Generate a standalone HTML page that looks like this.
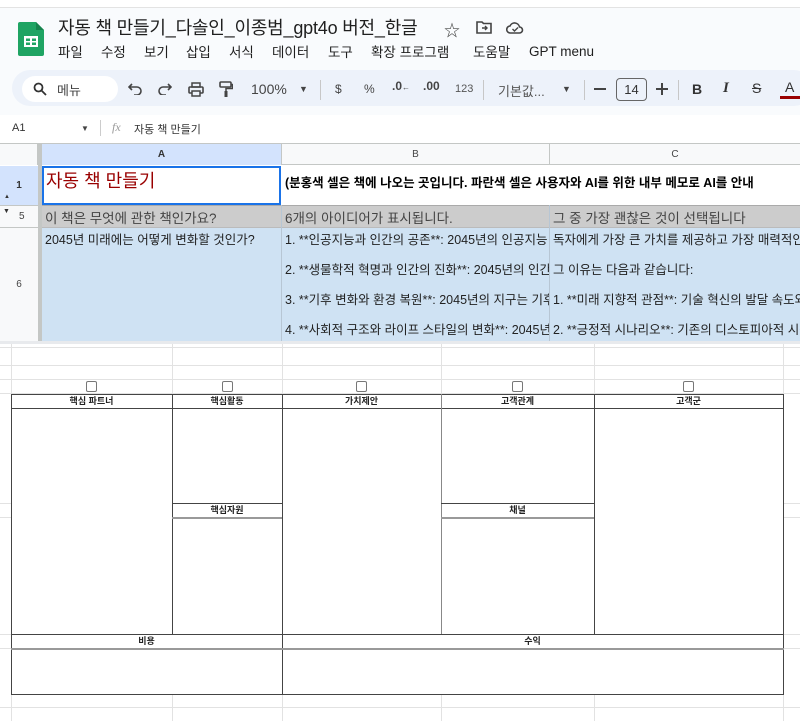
<!DOCTYPE html>
<html><head><meta charset="utf-8"><style>
*{margin:0;padding:0;box-sizing:border-box}
body{width:800px;height:721px;overflow:hidden;background:#fff;font-family:"Liberation Sans","Noto Sans CJK KR",sans-serif;position:relative;color:#1f1f1f}
.a{position:absolute;white-space:nowrap}
.hl{position:absolute;height:1px;background:#e2e2e2}
.vl{position:absolute;width:1px;background:#e2e2e2}
.bl{position:absolute;background:#444}
.lab{position:absolute;font-size:9px;font-weight:bold;text-align:center;line-height:14px;color:#222}
.cb{position:absolute;width:11px;height:11px;border:1.5px solid #777;border-radius:2px;background:#fff}
.m{position:absolute;top:43px;font-size:13.5px;line-height:20px;height:20px;color:#1f1f1f;white-space:nowrap}
</style></head><body>
<div class="a" style="left:0;top:7px;width:800px;height:136px;background:#f9fbfd;border-top:1px solid #e3e3e3"></div>
<svg class="a" style="left:18px;top:22px" width="26" height="34" viewBox="0 0 26 34"><path d="M2 0h16l8 8v24a2 2 0 0 1-2 2H2a2 2 0 0 1-2-2V2a2 2 0 0 1 2-2z" fill="#1fa463"/><path d="M18 0v8h8z" fill="#16834d"/><rect x="6" y="14" width="14" height="11" fill="#fff"/><rect x="8" y="16.5" width="4" height="2.5" fill="#1fa463"/><rect x="14" y="16.5" width="4" height="2.5" fill="#1fa463"/><rect x="8" y="20.5" width="4" height="2.5" fill="#1fa463"/><rect x="14" y="20.5" width="4" height="2.5" fill="#1fa463"/></svg>
<div class="a" style="left:58px;top:14px;font-size:18px;letter-spacing:-0.2px;color:#1f1f1f">자동 책 만들기_다솔인_이종범_gpt4o 버전_한글</div>
<div class="a" style="left:444px;top:17px;font-size:16px;color:#444">☆</div>
<svg class="a" style="left:476px;top:21px" width="16" height="13" viewBox="0 0 16 13"><path d="M1 1h5l1.5 1.5H15V12H1z" fill="none" stroke="#444" stroke-width="1.6"/><path d="M6 7h5M9 5l2 2-2 2" stroke="#444" stroke-width="1.4" fill="none"/></svg>
<svg class="a" style="left:506px;top:21px" width="18" height="13" viewBox="0 0 18 13"><path d="M4.5 12a3.5 3.5 0 0 1-.5-7 5 5 0 0 1 9.5 1A3 3 0 0 1 13.5 12z" fill="none" stroke="#444" stroke-width="1.6"/><path d="M6.5 8l2 2 3.5-3.5" stroke="#444" stroke-width="1.4" fill="none"/></svg>
<div class="m" style="left:58px">파일</div>
<div class="m" style="left:101px">수정</div>
<div class="m" style="left:144px">보기</div>
<div class="m" style="left:186px">삽입</div>
<div class="m" style="left:229px">서식</div>
<div class="m" style="left:272px">데이터</div>
<div class="m" style="left:328px">도구</div>
<div class="m" style="left:371px">확장 프로그램</div>
<div class="m" style="left:473px">도움말</div>
<div class="m" style="left:529px;top:42px">GPT menu</div>
<div class="a" style="left:12px;top:70px;width:800px;height:36px;background:#edf2fa;border-radius:18px"></div>
<div class="a" style="left:22px;top:76px;width:96px;height:26px;background:#fff;border-radius:13px"></div>
<svg class="a" style="left:33px;top:82px" width="14" height="14" viewBox="0 0 14 14"><circle cx="5.5" cy="5.5" r="4" fill="none" stroke="#333" stroke-width="1.8"/><path d="M8.5 8.5l4.5 4.5" stroke="#333" stroke-width="1.8"/></svg>
<div class="a" style="left:57px;top:80px;font-size:13px;color:#444">메뉴</div>
<svg class="a" style="left:128px;top:83px" width="14" height="12" viewBox="0 0 14 12"><path d="M4 1L1 4l3 3M1 4h8a4 4 0 0 1 0 8H6" fill="none" stroke="#444" stroke-width="1.6"/></svg>
<svg class="a" style="left:158px;top:83px" width="14" height="12" viewBox="0 0 14 12"><path d="M10 1l3 3-3 3M13 4H5a4 4 0 0 0 0 8h3" fill="none" stroke="#444" stroke-width="1.6"/></svg>
<svg class="a" style="left:188px;top:82px" width="16" height="15" viewBox="0 0 16 15"><rect x="1" y="5" width="14" height="6" rx="1" fill="none" stroke="#444" stroke-width="1.6"/><rect x="4" y="1" width="8" height="4" fill="none" stroke="#444" stroke-width="1.5"/><rect x="4" y="9" width="8" height="5" fill="#edf2fa" stroke="#444" stroke-width="1.5"/></svg>
<svg class="a" style="left:219px;top:81px" width="14" height="17" viewBox="0 0 14 17"><rect x="1" y="1" width="11" height="5" rx="1" fill="none" stroke="#444" stroke-width="1.6"/><path d="M12 3.5h1.5v4H7v3" fill="none" stroke="#444" stroke-width="1.5"/><rect x="5.5" y="10" width="3" height="6" fill="#444"/></svg>
<div class="a" style="left:251px;top:81px;font-size:14px;color:#444">100%</div>
<div class="a" style="left:299px;top:84px;font-size:9px;color:#444">▼</div>
<div class="a" style="left:320px;top:80px;width:1px;height:20px;background:#c7c7c7"></div>
<div class="a" style="left:335px;top:82px;font-size:12px;color:#444">$</div>
<div class="a" style="left:364px;top:82px;font-size:12px;color:#444">%</div>
<div class="a" style="left:392px;top:79px;font-size:12px;color:#444;font-weight:bold">.0<span style="font-size:8px">←</span></div>
<div class="a" style="left:423px;top:79px;font-size:12px;color:#444;font-weight:bold">.00</div>
<div class="a" style="left:455px;top:83px;font-size:11px;color:#555">123</div>
<div class="a" style="left:483px;top:80px;width:1px;height:20px;background:#c7c7c7"></div>
<div class="a" style="left:498px;top:81px;font-size:13px;color:#555">기본값...</div>
<div class="a" style="left:562px;top:84px;font-size:9px;color:#444">▼</div>
<div class="a" style="left:584px;top:80px;width:1px;height:20px;background:#c7c7c7"></div>
<div class="a" style="left:594px;top:88px;width:12px;height:2px;background:#444"></div>
<div class="a" style="left:616px;top:78px;width:31px;height:23px;border:1px solid #666;border-radius:4px;font-size:13px;text-align:center;line-height:21px;color:#333">14</div>
<div class="a" style="left:656px;top:88px;width:12px;height:2px;background:#444"></div>
<div class="a" style="left:661px;top:83px;width:2px;height:12px;background:#444"></div>
<div class="a" style="left:678px;top:80px;width:1px;height:20px;background:#c7c7c7"></div>
<div class="a" style="left:692px;top:81px;font-size:14px;font-weight:bold;color:#333">B</div>
<div class="a" style="left:723px;top:80px;font-size:15px;font-style:italic;font-family:'Liberation Serif',serif;font-weight:bold;color:#333">I</div>
<div class="a" style="left:752px;top:80px;font-size:14px;color:#333;text-decoration:line-through">S</div>
<div class="a" style="left:785px;top:79px;font-size:14px;color:#333">A</div>
<div class="a" style="left:780px;top:96px;width:20px;height:3px;background:#990000"></div>
<div class="a" style="left:0;top:115px;width:800px;height:28px;background:#fff"></div>
<div class="a" style="left:12px;top:122px;font-size:11px;color:#333">A1</div>
<div class="a" style="left:81px;top:124px;font-size:8px;color:#444">▼</div>
<div class="a" style="left:100px;top:120px;width:1px;height:16px;background:#ccc"></div>
<div class="a" style="left:112px;top:120px;font-size:12px;font-style:italic;font-family:'Liberation Serif',serif;color:#999">fx</div>
<div class="a" style="left:134px;top:121px;font-size:11px;color:#333">자동 책 만들기</div>
<div class="a" style="left:0;top:143px;width:800px;height:1px;background:#c4c7c5"></div>
<div class="a" style="left:0;top:144px;width:800px;height:21px;background:#f8f9fa;border-bottom:1px solid #c4c7c5"></div>
<div class="a" style="left:0;top:144px;width:38px;height:21px;background:#f8f9fa;border-right:1px solid #c4c7c5"></div>
<div class="a" style="left:38px;top:144px;width:4px;height:200px;background:#c4c7c5"></div>
<div class="a" style="left:42px;top:144px;width:239px;height:21px;background:#d3e3fd;font-size:10px;font-weight:bold;text-align:center;line-height:21px;color:#333">A</div>
<div class="a" style="left:281px;top:144px;width:268px;height:21px;border-left:1px solid #c4c7c5;font-size:10px;text-align:center;line-height:21px;color:#444">B</div>
<div class="a" style="left:549px;top:144px;width:251px;height:21px;border-left:1px solid #c4c7c5;font-size:10px;text-align:center;line-height:21px;color:#444">C</div>
<div class="a" style="left:0;top:166px;width:38px;height:39px;background:#d3e3fd;font-size:10px;font-weight:bold;text-align:center;line-height:39px;color:#333">1</div>
<div class="a" style="left:4px;top:194px;font-size:6px;color:#333">▲</div>
<div class="a" style="left:0;top:205px;width:38px;height:1px;background:#c4c7c5"></div>
<div class="a" style="left:0;top:206px;width:38px;height:21px;background:#f8f9fa;font-size:10px;text-align:center;line-height:21px;color:#444">&nbsp;&nbsp;5</div>
<div class="a" style="left:3px;top:208px;font-size:7px;color:#333">▼</div>
<div class="a" style="left:0;top:227px;width:38px;height:1px;background:#c4c7c5"></div>
<div class="a" style="left:0;top:228px;width:38px;height:113px;background:#f8f9fa;font-size:10px;text-align:center;line-height:113px;color:#444">6</div>
<div class="a" style="left:42px;top:166px;width:758px;height:39px;background:#fff"></div>
<div class="a" style="left:42px;top:166px;width:239px;height:39px;border:2px solid #1a73e8"></div>
<div class="a" style="left:46px;top:167px;font-size:18px;color:#990000">자동 책 만들기</div>
<div class="a" style="left:285px;top:172px;font-size:12.5px;font-weight:bold;color:#000">(분홍색 셀은 책에 나오는 곳입니다. 파란색 셀은 사용자와 AI를 위한 내부 메모로 AI를 안내</div>
<div class="a" style="left:42px;top:205px;width:758px;height:22px;background:#cccccc;border-top:1px solid #aaa"></div>
<div class="a" style="left:45px;top:207px;font-size:13.5px;color:#444">이 책은 무엇에 관한 책인가요?</div>
<div class="a" style="left:285px;top:207px;font-size:13.5px;color:#444">6개의 아이디어가 표시됩니다.</div>
<div class="a" style="left:553px;top:207px;font-size:13.5px;color:#444">그 중 가장 괜찮은 것이 선택됩니다</div>
<div class="a" style="left:42px;top:227px;width:758px;height:114px;background:#cfe2f3;border-top:1px solid #bbb"></div>
<div class="a" style="left:281px;top:205px;width:1px;height:136px;background:#b7c6d4"></div>
<div class="a" style="left:549px;top:205px;width:1px;height:136px;background:#b7c6d4"></div>
<div class="a" style="left:45px;top:229px;font-size:12.5px;color:#222">2045년 미래에는 어떻게 변화할 것인가?</div>
<div class="a" style="left:285px;top:225px;width:264px;height:116px;overflow:hidden;font-size:12.5px;color:#222;line-height:30px">1. **인공지능과 인간의 공존**: 2045년의 인공지능<br>2. **생물학적 혁명과 인간의 진화**: 2045년의 인간<br>3. **기후 변화와 환경 복원**: 2045년의 지구는 기후<br>4. **사회적 구조와 라이프 스타일의 변화**: 2045년</div>
<div class="a" style="left:553px;top:225px;width:247px;height:116px;overflow:hidden;font-size:12.5px;color:#222;line-height:30px">독자에게 가장 큰 가치를 제공하고 가장 매력적인<br>그 이유는 다음과 같습니다:<br>1. **미래 지향적 관점**: 기술 혁신의 발달 속도와<br>2. **긍정적 시나리오**: 기존의 디스토피아적 시각</div>
<div class="a" style="left:0;top:341px;width:800px;height:3px;background:#e8eaed"></div>
<div class="hl" style="left:0;top:347px;width:800px"></div>
<div class="hl" style="left:0;top:365px;width:800px"></div>
<div class="hl" style="left:0;top:379px;width:800px"></div>
<div class="hl" style="left:0;top:393px;width:800px"></div>
<div class="hl" style="left:0;top:503px;width:800px"></div>
<div class="hl" style="left:0;top:517px;width:800px"></div>
<div class="hl" style="left:0;top:634px;width:800px"></div>
<div class="hl" style="left:0;top:648px;width:800px"></div>
<div class="hl" style="left:0;top:707px;width:800px"></div>
<div class="vl" style="left:11px;top:344px;height:377px"></div>
<div class="vl" style="left:172px;top:344px;height:377px"></div>
<div class="vl" style="left:282px;top:344px;height:377px"></div>
<div class="vl" style="left:441px;top:344px;height:377px"></div>
<div class="vl" style="left:594px;top:344px;height:377px"></div>
<div class="vl" style="left:783px;top:344px;height:377px"></div>
<div class="a" style="left:11px;top:394px;width:773px;height:301px;background:#fff;border:1px solid #444"></div>
<div class="bl" style="left:11px;top:408px;width:773px;height:1px"></div>
<div class="bl" style="left:172px;top:394px;width:1px;height:240px"></div>
<div class="bl" style="left:282px;top:394px;width:1px;height:301px"></div>
<div class="bl" style="left:441px;top:394px;width:1px;height:240px;background:#888"></div>
<div class="bl" style="left:594px;top:394px;width:1px;height:240px"></div>
<div class="bl" style="left:172px;top:503px;width:110px;height:1px"></div>
<div class="bl" style="left:172px;top:517px;width:110px;height:2px;background:#999"></div>
<div class="bl" style="left:441px;top:503px;width:153px;height:1px"></div>
<div class="bl" style="left:441px;top:517px;width:153px;height:2px;background:#999"></div>
<div class="bl" style="left:11px;top:634px;width:773px;height:1px"></div>
<div class="bl" style="left:11px;top:648px;width:773px;height:2px;background:#999"></div>
<div class="lab" style="left:11px;top:394px;width:161px">핵심 파트너</div>
<div class="lab" style="left:172px;top:394px;width:110px">핵심활동</div>
<div class="lab" style="left:282px;top:394px;width:159px">가치제안</div>
<div class="lab" style="left:441px;top:394px;width:153px">고객관계</div>
<div class="lab" style="left:594px;top:394px;width:189px">고객군</div>
<div class="lab" style="left:172px;top:503px;width:110px">핵심자원</div>
<div class="lab" style="left:441px;top:503px;width:153px">채널</div>
<div class="lab" style="left:11px;top:634px;width:271px">비용</div>
<div class="lab" style="left:282px;top:634px;width:501px">수익</div>
<div class="cb" style="left:86px;top:381px"></div>
<div class="cb" style="left:222px;top:381px"></div>
<div class="cb" style="left:356px;top:381px"></div>
<div class="cb" style="left:512px;top:381px"></div>
<div class="cb" style="left:683px;top:381px"></div>
</body></html>
